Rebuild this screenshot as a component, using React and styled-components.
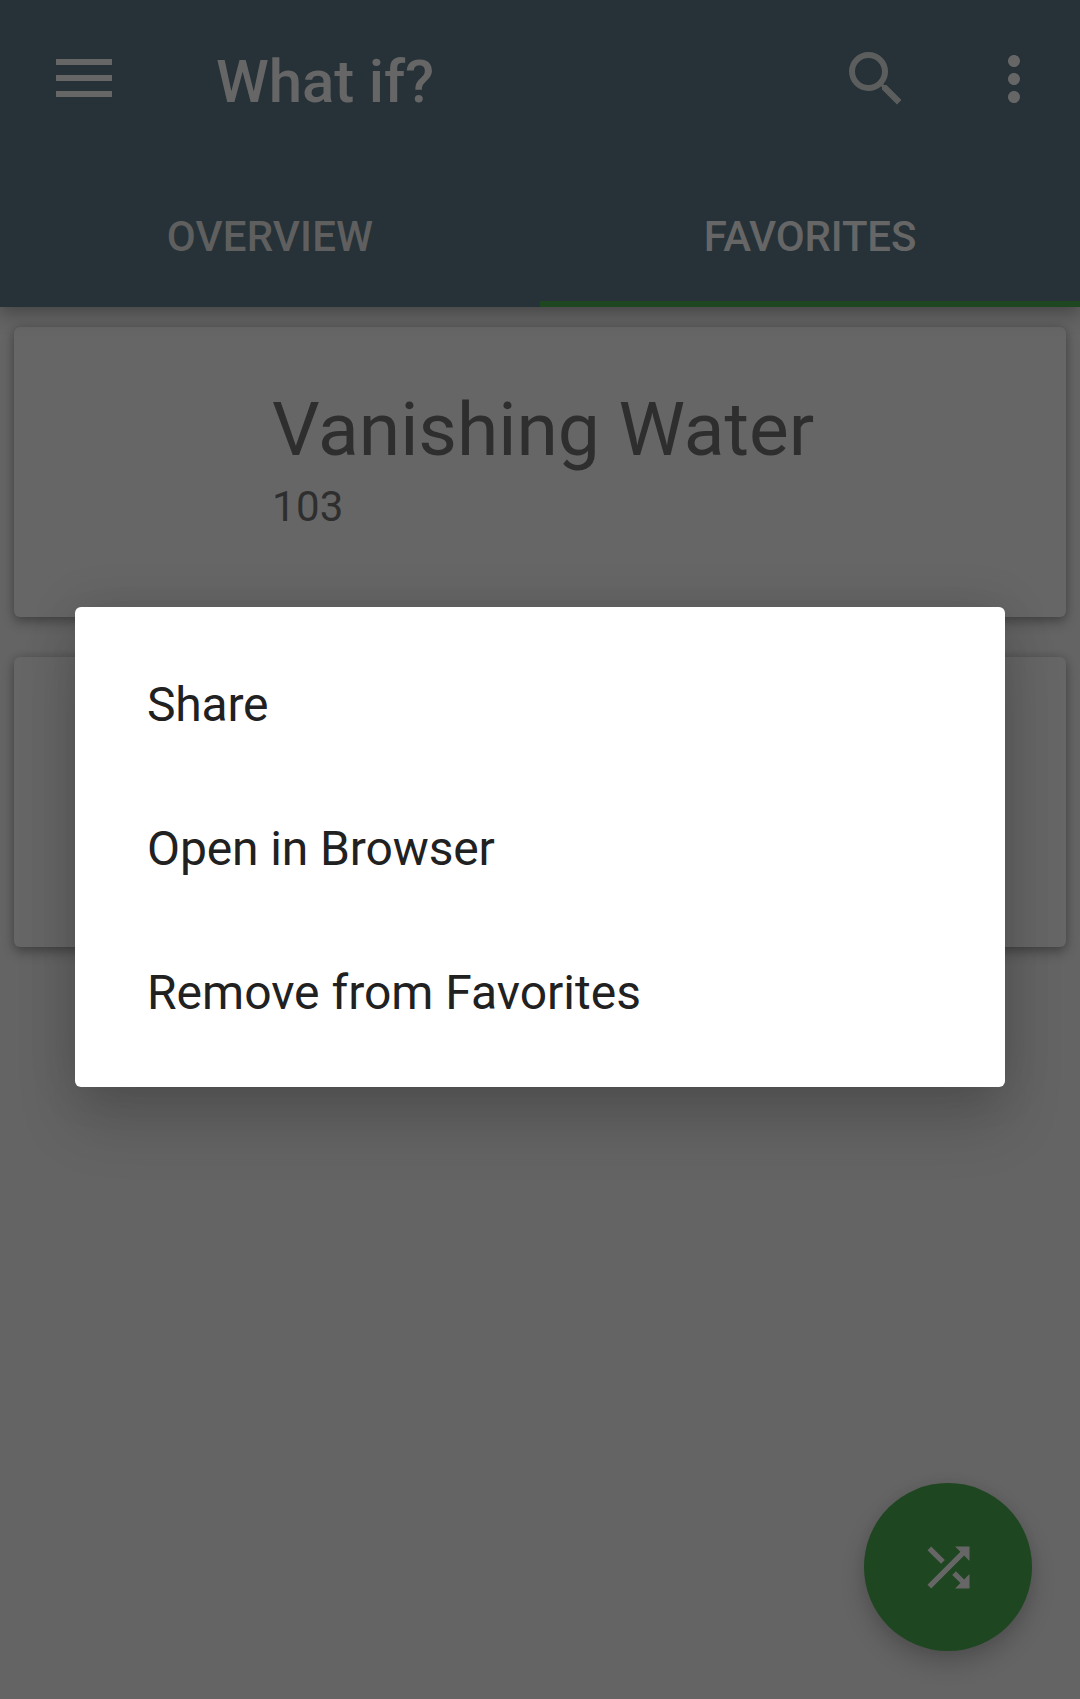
import React from 'react';
import styled, { createGlobalStyle } from 'styled-components';

const Global = createGlobalStyle`
  * { box-sizing: border-box; }
  body { margin: 0; background: #646464; font-family: Roboto, sans-serif; }
`;
const Screen = styled.div`
  position: relative;
  height: 1699px;
  overflow: hidden;
  background: #646464;
`;
const Header = styled.header`
  position: relative;
  height: 307px;
  background: #263238;
  box-shadow: 0 8px 18px rgba(0, 0, 0, 0.25), 0 0 10px rgba(0, 0, 0, 0.08);
`;
const Toolbar = styled.div`
  height: 168px;
  display: flex;
  align-items: center;
  padding: 0 30px 10px 56px;
`;
const Title = styled.h1`
  margin: 5px 0 0 104px;
  flex: 1;
  font-size: 60px;
  line-height: 70px;
  font-weight: 500;
  letter-spacing: -0.12px;
  color: #666;
`;
const Icon = styled.svg`
  display: block;
  flex: none;
  width: ${p => p.$size}px;
  height: ${p => p.$size}px;
  margin-left: ${p => p.$gap || 0}px;
  fill: ${p => p.$color || '#666'};
`;
const MenuIcon = styled.svg`
  display: block;
  flex: none;
  width: 56px;
  height: 38px;
  margin-bottom: 2px;
  fill: #666;
`;
const Tabs = styled.nav`
  display: grid;
  grid-template-columns: 1fr 1fr;
  height: 139px;
`;
const Tab = styled.div`
  display: flex;
  align-items: center;
  justify-content: center;
  padding-top: 4px;
  font-size: 42px;
  font-weight: 500;
  letter-spacing: ${p => p.$track || 0}px;
  color: ${p => (p.$active ? '#666' : '#5f5f5f')};
  border-bottom: 6px solid ${p => (p.$active ? '#1e4620' : 'transparent')};
`;
const List = styled.main`
  display: flex;
  flex-direction: column;
  gap: 40px;
  padding: 20px 14px;
`;
const Card = styled.article`
  height: 290px;
  border-radius: 6px;
  background: #666;
  box-shadow: 0 6px 12px rgba(0, 0, 0, 0.25), 0 0 9px rgba(0, 0, 0, 0.16);
  padding: 58px 0 0 258px;
  color: #2e2e2e;
`;
const CardTitle = styled.h2`
  margin: 0;
  font-size: 75px;
  line-height: 88px;
  font-weight: 400;
  letter-spacing: -0.04px;
`;
const CardNumber = styled.div`
  font-size: 42px;
  line-height: 50px;
  margin-top: 9px;
  letter-spacing: 0.3px;
`;
const Dialog = styled.div`
  position: absolute;
  left: 75px;
  top: 607px;
  width: 930px;
  height: 480px;
  padding: 25px 0 23px;
  border-radius: 6px;
  background: #fff;
  box-shadow: 0 36px 60px rgba(0, 0, 0, 0.16), 0 0 48px rgba(0, 0, 0, 0.13);
`;
const MenuItem = styled.div`
  height: 144px;
  padding-left: 72px;
  display: flex;
  align-items: center;
  font-size: 48px;
  letter-spacing: ${p => p.$track || 0}px;
  color: #212121;
`;
const Fab = styled.div`
  position: absolute;
  left: 864px;
  top: 1483px;
  width: 168px;
  height: 168px;
  border-radius: 50%;
  display: flex;
  align-items: center;
  justify-content: center;
  background: #1e4620;
  box-shadow: 0 12px 24px rgba(0, 0, 0, 0.2), 0 0 12px rgba(0, 0, 0, 0.06);
`;

export default function App() {
  return (
    <>
      <Global />
      <Screen>
        <Header>
          <Toolbar>
            <MenuIcon viewBox="0 0 56 38"><path d="M0 0h56v6H0zM0 16h56v6H0zM0 32h56v6H0z" /></MenuIcon>
            <Title>What if?</Title>
            <Icon $size={72} $color="#5c5e5e" viewBox="0 0 24 24"><path d="M15.5 14h-.79l-.28-.27A6.471 6.471 0 0 0 16 9.5 6.5 6.5 0 1 0 9.5 16c1.61 0 3.09-.59 4.23-1.57l.27.28v.79l5 4.99L20.49 19l-4.99-5zm-6 0C7.01 14 5 11.99 5 9.5S7.01 5 9.5 5 14 7.01 14 9.5 11.99 14 9.5 14z" /></Icon>
            <Icon $size={72} $gap={66} viewBox="0 0 24 24"><path d="M12 8c1.1 0 2-.9 2-2s-.9-2-2-2-2 .9-2 2 .9 2 2 2zm0 2c-1.1 0-2 .9-2 2s.9 2 2 2 2-.9 2-2-.9-2-2-2zm0 6c-1.1 0-2 .9-2 2s.9 2 2 2 2-.9 2-2-.9-2-2-2z" /></Icon>
          </Toolbar>
          <Tabs>
            <Tab $track={0.15}>OVERVIEW</Tab>
            <Tab $active $track={-0.18}>FAVORITES</Tab>
          </Tabs>
        </Header>
        <List>
          <Card>
            <CardTitle>Vanishing Water</CardTitle>
            <CardNumber>103</CardNumber>
          </Card>
          <Card />
        </List>
        <Fab>
          <Icon $size={63} viewBox="0 0 24 24"><path d="M10.59 9.17 5.41 4 4 5.41l5.17 5.17 1.42-1.41zM14.5 4l2.04 2.04L4 18.59 5.41 20 17.96 7.46 20 9.5V4h-5.5zm.33 9.41-1.41 1.41 3.13 3.13L14.5 20H20v-5.5l-2.04 2.04-3.13-3.13z" /></Icon>
        </Fab>
        <Dialog>
          <MenuItem $track={-0.2}>Share</MenuItem>
          <MenuItem $track={-0.12}>Open in Browser</MenuItem>
          <MenuItem>Remove from Favorites</MenuItem>
        </Dialog>
      </Screen>
    </>
  );
}
